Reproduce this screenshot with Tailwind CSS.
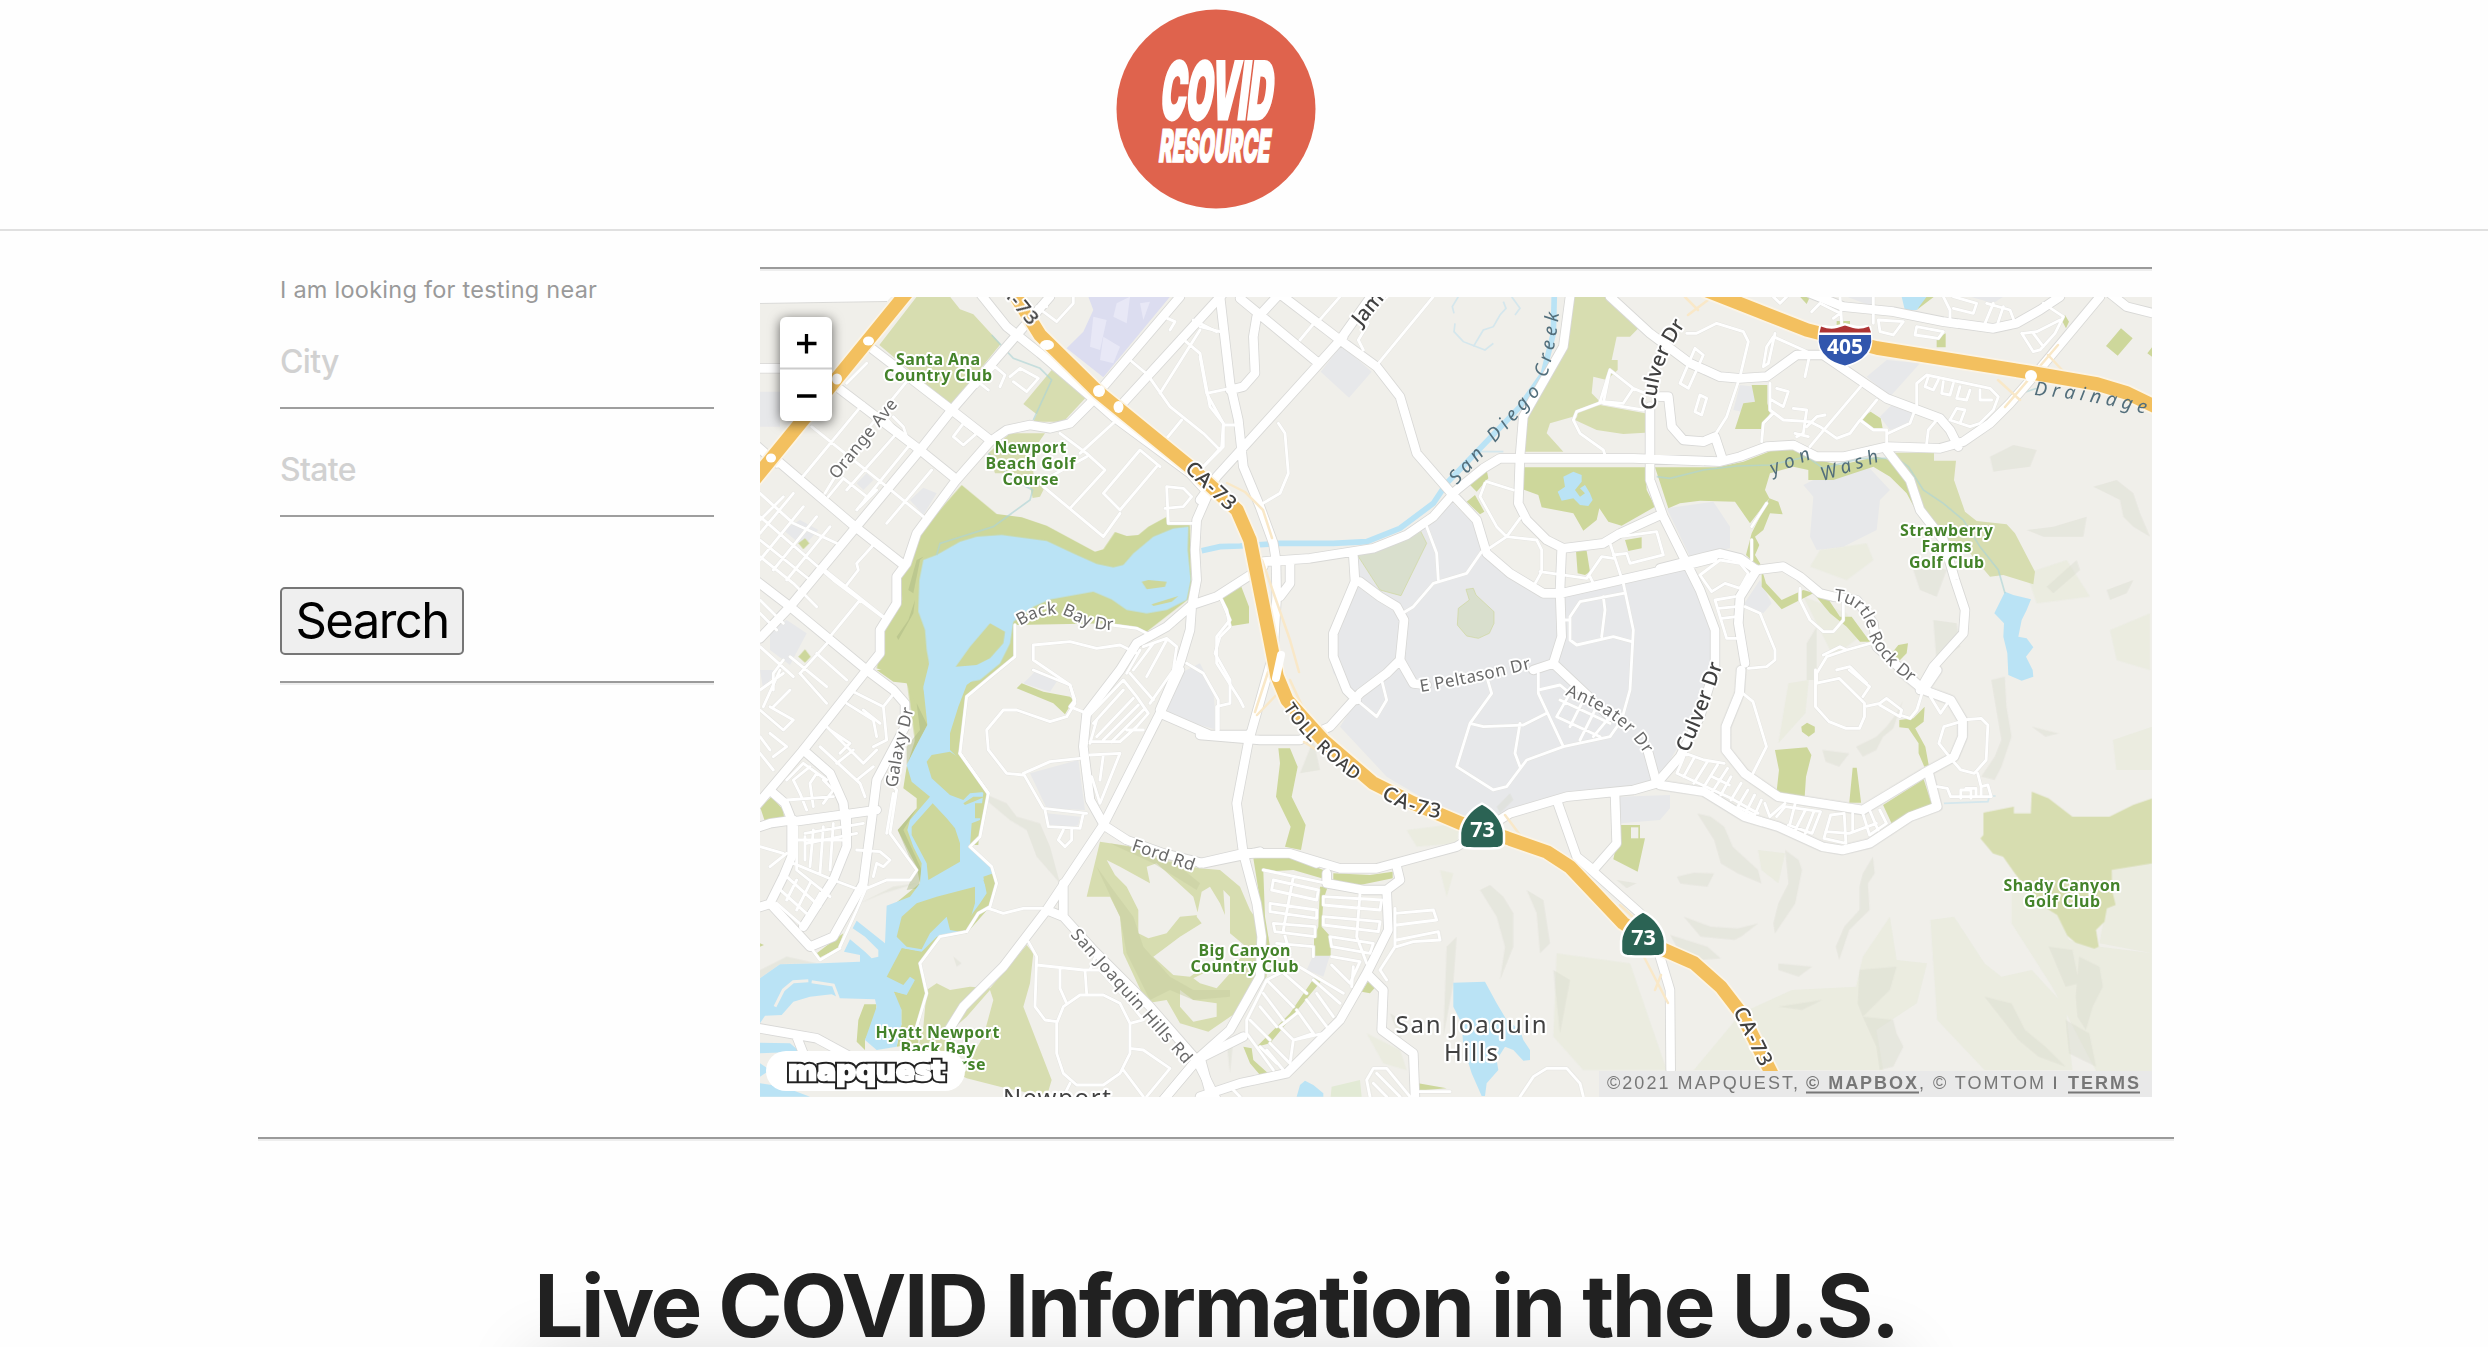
<!DOCTYPE html>
<html lang="en">
<head>
<meta charset="utf-8">
<title>COVID Resource</title>
<script src="https://cdn.jsdelivr.net/npm/@tailwindcss/browser@4"></script>
</head>
<body class="w-[2488px] h-[1347px] overflow-hidden bg-[#fefefe] font-['Inter',sans-serif]">
<header class="h-[231px] border-b-2 border-[#e0e0e0] flex justify-center pr-14 pt-[9px]">
  <svg class="w-[200px] h-[200px]" viewBox="0 0 200 200">
    <circle cx="100" cy="100" r="99.5" fill="#df634d"/>
    <g fill="#fff" stroke="#fff" font-family="Inter" font-weight="900">
      <text transform="translate(43 110) skewX(-7) scale(1 2.02)" font-size="39" stroke-width="1.6" textLength="112" lengthAdjust="spacingAndGlyphs">COVID</text>
      <text transform="translate(42 153) skewX(-7) scale(1 1.8)" font-size="25" stroke-width=".9" textLength="111" lengthAdjust="spacingAndGlyphs">RESOURCE</text>
    </g>
  </svg>
</header>
<main class="w-[1916px] ml-[258px]">
  <div class="flex px-[22px] pt-9">
    <form class="w-[434px] mr-[46px]">
      <label class="block pt-[7px] h-[58px] leading-8 text-[23.5px] tracking-[0.25px] text-[#9a9a9a]">I am looking for testing near</label>
      <div class="h-[84px] border-b-2 border-[#9e9e9e] pt-[17px] leading-10 text-[32px] font-medium tracking-[-0.7px] text-[#d1d1d1]">City</div>
      <div class="h-[108px] border-b-2 border-[#9e9e9e] pt-[41px] leading-10 text-[32px] font-medium tracking-[-0.7px] text-[#d1d1d1]">State</div>
      <button type="button" class="block mt-[70px] w-[184px] h-[68px] rounded-[5px] border-2 border-[#767676] bg-[#efefef] text-[49px] leading-[60px] tracking-[-1.6px] text-black">Search</button>
      <div class="mt-[26px] h-1 border-t-2 border-t-[#9a9a9a] border-b-2 border-b-[#eee]"></div>
    </form>
    <section class="w-[1392px]">
      <div class="h-1 border-t-2 border-t-[#9a9a9a] border-b-2 border-b-[#eee]"></div>
      <div class="relative mt-[26px] h-[800px] overflow-hidden bg-[#f0efea]">
        <svg class="block w-[1392px] h-[800px]" viewBox="760 297 1392 800">
          <defs>
            <g id="major">
              <g transform="translate(750 260) scale(.33333)">
                <path d="M30 1135 120 1040 315 805 510 570 605 450 800 225 900 110M260 380 510 570 615 655M365 265 605 450 720 540M80 600 315 800 455 910M-10 940 120 1040 350 1230M1040 410 960 490 900 505 840 495 770 510 720 545 615 665 500 820 470 910 440 950 440 1030 390 1110 390 1180 350 1230 160 1470 0 1660M690 100 770 200 870 280 1010 400 1090 470 1320 640 1375 700 1340 780 1335 870 1340 960 1325 1040 1320 1110 1290 1210 1230 1350M1060 380 1290 110M1100 450 1420 100M1325 1035 1400 1010 1540 920M1325 1035 1250 1100 1160 1150 1110 1230 1010 1360 1000 1460 1020 1620 1065 1700M30 325H110M0 540 80 610"/>
              </g>
              <g transform="translate(1200 260) scale(.33333)">
                <path d="M60 110 90 370 115 480 130 620 180 740 220 850 228 900 230 1010 220 1180 150 1430M170 170 160 230 165 340 130 380 90 390M120 115 350 305M430 230 340 330 50 650 0 720M250 110 420 240 530 320 600 410 650 580 750 695 830 780 860 880 930 940 1030 1000H1085L1460 915 1540 895M180 165 240 100M420 240 520 100M1110 110 1090 260 970 470 960 590 955 730 980 780 1040 840 1090 865 1210 850 1260 820 1380 765M190 905 330 895 520 865 620 825 700 770 770 690 850 625 900 595H1300L1560 605 1620 590 1700 560 1780 555 1850 590 1930 590 2060 560 2220 565 2290 545 2370 490 2430 430 2500 350 2700 110M460 885 465 965 400 1120 400 1190 440 1290 470 1320M480 965 540 1010 590 1040 612 1080 600 1200 560 1240 480 1300 390 1400 300 1440 180 1440 0 1425M600 1200 640 1270 680 1275M1085 870 1080 990 1085 1130 1060 1210 1000 1230M1060 1210 1230 1370M1230 110 1350 220 1470 310 1560 350 1620 355 1700 350 1790 285H1870L2060 415 2220 475 2250 510 2275 560M1350 440V660L1390 770 1500 990 1545 1110 1545 1220 1500 1370 1440 1490 1370 1570M270 900V970L240 1010"/>
              </g>
              <g transform="translate(1660 260) scale(.33333)">
                <path d="M0 410 25 410 35 500 70 540 130 545 165 530 185 590M450 100 550 140 700 155 850 185 1000 205 1070 190 1140 150 1200 110M1350 100 1400 140 1480 160M680 570 750 660 780 750 850 840 885 960 915 1050 910 1120 820 1220 780 1290M0 925 180 880 240 895 290 930 370 920 420 950 480 1000 520 1010 590 1020 640 1090 650 1160 780 1280M290 930 240 1010 235 1090 255 1210"/>
              </g>
              <g transform="translate(750 670) scale(.33333)">
                <path d="M1290 0 1230 130 1060 465 890 720 760 890 640 1010 590 1090M1230 130 1380 195H1500M1060 465 1130 510 1240 550 1360 580 1530 545M890 720 940 740 1030 840 1200 1010 1340 1170 1400 1290M1340 1170 1240 1290M0 1070 200 1105 320 1170M1480 1100 1340 1170M940 640V740M140 1100 160 1150M350 0 430 60 465 100V170L380 330 365 450 340 640 250 800 180 830 60 700 100 620 125 560V450L105 400 65 365M160 240 240 310 280 400 290 500M130 455 380 420M0 480 60 460 130 450M0 720 65 700M290 430 290 530 250 630 160 770"/>
              </g>
              <g transform="translate(1200 670) scale(.33333)">
                <path d="M150 190 110 400 130 550 170 700 185 800 180 920 90 1080 0 1160 -110 1290M0 580 130 550H270L420 595H530L770 530 930 430 1100 380 1300 360 1370 340 1340 230M130 550H270L350 580M380 610 380 640 490 660H560L600 630 590 590M560 660 565 780 500 910 420 1050 260 1210 120 1240 0 1280M0 1160 30 1270M500 910 550 960 545 1080 640 1150 645 1280M1070 390 1130 560 1180 600 1250 520 1245 370M1130 560 1320 730M1380 860 1410 960 1412 1200"/>
              </g>
              <g transform="matrix(.338 0 0 .33333 1660 670)">
                <path d="M240 0 235 70 195 170V240L250 310 350 380 600 420 780 310 870 260 895 200V150L860 90 780 60 720 10M780 60 820 0M0 345 130 365 250 440 350 470 480 530 540 540 620 520 740 440 820 410 795 310"/>
              </g>
            </g>
            <g id="minor">
              <g transform="translate(750 260) scale(.33333)">
                <path d="M185 500 410 680 520 770M290 370 350 310M340 430 150 660M470 365 310 560 225 700M440 520 290 690M475 560 320 750M410 475 480 560 460 500 430 470M545 630 410 790M380 690 330 740 350 710 280 655 235 710M610 530 640 490 680 520 640 555ZM30 780 100 710M30 700 130 790 260 850M30 840 180 960M30 890 130 970 200 1040M130 700 30 820M160 740 30 900M200 770 70 930M240 800 110 960M280 840 150 1010M30 770 250 960 410 1080M225 930 400 1070M370 855 320 910 325 930 290 975M330 1020 240 1130M30 1020 100 1090M30 1060 80 1110M240 1140 150 1240M120 1190 230 1280M200 1180 290 1260M30 1160 130 1250M70 1290V1240L100 1200M680 380 735 320 765 345 750 380M690 370 715 390M780 350 810 325 865 355 830 395 790 365M890 140 860 140 920 185 970 130V100M930 520 1010 580 1065 630M990 580 1100 480M1010 590 900 650M1220 620 1110 750 1060 700 1170 570 1230 620M880 680 1060 830 1110 760M1065 630 960 745M1250 680 1300 685 1325 710 1300 740 1245 745M1250 680 1255 790H1330M1240 170 1275 185 1260 210M1190 340 1260 440 1360 520 1410 570M1140 300 1200 350M1350 210 1230 400M1290 230 1350 280 1380 440 1420 490 1415 560 1360 620M1330 180 1400 215M1295 480 1250 535M795 1095 795 1190 710 1260 650 1310 630 1480 715 1600M850 1155 960 1145 1040 1165 1110 1155 1160 1180M850 1155V1200L960 1275 975 1330 950 1370 900 1385 800 1350 760 1350 710 1410 715 1470 770 1540 820 1545M1085 1095 1160 1105 1200 1125M1170 1170 1130 1240M1210 1150 1150 1230M1250 1140 1190 1250M1180 1160 1250 1135 1280 1160 1270 1230 1200 1330M1410 1010 1440 1080 1400 1130 1400 1210 1470 1320 1480 1340M1310 1210 1360 1240 1405 1320V1410"/>
              </g>
              <g transform="translate(1200 260) scale(.33333)">
                <path d="M0 290 20 400 70 490 70 560 10 620M0 200 60 215M20 400 90 385M70 495H110M235 490 255 520 265 640 240 700 180 735M350 180 300 240M420 110 350 190M700 110 535 310M480 190 505 190 475 240 490 270M680 800 710 880 715 960M845 875 800 940 700 970 640 1040 615 1055M860 665 940 690M855 670 840 710 890 800 920 830 860 870M960 775 920 830 1010 840 1025 870V935L1000 980M1020 935 1160 955 1205 890 1240 895M1200 425 1230 330 1300 385 1360 410M1300 385 1270 430 1210 425 1130 455 1120 480 1140 520 1210 570 1215 585M1230 330 1210 430 1330 450M1230 850 1270 970 1300 1110 1290 1290 1265 1380 1230 1430 1090 1460 980 1500 920 1580 880 1590 770 1520 810 1390 875 1300 860 1250M1260 830 1370 815 1390 885 1290 910 1280 880 1240 885M1270 1000 1140 1025 1110 1070V1140L1130 1155 1240 1130 1295 1145M1210 1010 1215 1050 1205 1130M1110 1080H1080M1170 950 1180 970M60 1010 80 1050 90 1100 60 1130 45 1180 90 1260 90 1330 50 1340V1420M810 1390 850 1400 970 1395 1040 1360M960 1390 945 1480 960 1520M1015 1240V1300L1090 1460M470 1320 530 1370 560 1320 545 1260M1015 1290 1080 1275 1110 1300 1070 1370M1080 1320 1230 1390M1070 1370 1200 1430M1150 1320 1110 1400M1190 1340 1140 1440M1230 1370 1180 1430"/>
              </g>
              <g transform="translate(1660 260) scale(.33333)">
                <path d="M80 220H110L170 190 250 215 265 245 240 350 200 470 165 525M105 265 130 285 85 385 60 370ZM120 405 140 415 125 465 105 455ZM345 220 325 310 310 320 320 260 340 230 430 270 450 280 435 350M330 370V450L370 480 450 485 480 500 530 535 570 520 600 480 640 510 680 510V560M450 560 500 500 610 370M340 460 310 490 305 545M350 385 385 395 370 440 335 420M400 445 440 450 430 520 410 530M440 500 470 470 495 465M405 520 445 530M605 475 650 420M685 520 750 490 765 450M800 550 805 510 830 480M770 440V370L800 345 990 385 1015 410 1000 450 960 490 930 500 870 480 890 445 915 450 900 490M805 350 795 380 820 390 835 360M850 365 845 400 870 405 880 370M900 380 890 415 920 420 930 390M960 390V420L995 420M455 155 480 130 540 160 520 175M540 110 545 190M640 110V190M655 180 730 185 700 225 660 215ZM770 200 850 215 835 235 765 225ZM850 110 870 150V190M880 110 950 130 940 160 880 145M1000 130 975 190M1030 140 1010 200M980 130 1050 150 1065 190M1150 130 1210 170 1185 220 1140 270 1120 275 1085 220M1090 220 1130 215 1200 180M1120 220 1150 260M340 110 360 130 390 100M120 945 180 900 240 910 265 940 240 985 195 970 155 995ZM165 1020 225 1010M175 1045 230 1040M185 1075 230 1070M165 1020 200 1135H235M255 1040 300 1060 345 1170 345 1200 320 1220 265 1225M420 985V1020L450 1080 490 1115H520L550 1080V1020M490 1185 540 1160 560 1170 500 1190 470 1240V1270M560 1170 650 1145M530 1230 570 1220 620 1270M275 800 320 730M275 900V840"/>
              </g>
              <g transform="translate(750 670) scale(.33333)">
                <path d="M850 0 960 45 975 90 960 110 1010 130M630 250 715 370 690 500 660 530 725 590 740 640 720 710 685 730 650 785 570 800 510 880 530 970 500 1070M715 715 760 730 820 715H890M990 265 900 275 820 310 880 415 1010 430M885 420 895 470 990 475 1000 430M940 480 925 510 945 530 965 510V480M835 815 860 860 855 1010 885 1050 920 1055M860 885 1000 900 1050 900 1140 1000 1180 1050 1140 1060M930 895V955L950 1000M1005 900 1010 970M1020 900 1040 850M920 1060 940 1010 990 975H1060L1110 1000 1140 1060V1150L1110 1210 1060 1245H980L940 1210 920 1150ZM1140 1135 1180 1140 1260 1195 1190 1280M1120 1200 1180 1280M960 1240 940 1280M1010 145 1120 30 1160 80 1195 130 1160 170 1110 215H1020M1030 160 1120 60M1040 200 1150 85M1060 210 1165 105M1085 215 1180 120M1040 150 1020 220M1020 255 1110 250 1050 400 1025 320M1060 255 1050 330M1140 10 1210 90M1130 180H1180M270 830 320 720 350 650M180 830 210 870 270 835M350 655 410 630H480L500 600 420 490 440 360 430 350M440 60 400 110 410 210 370 230M300 60 400 110M290 100 370 150 380 200M240 180 300 220 270 250M210 230 330 340 345 380M220 160 340 280 380 240M340 120 390 160M260 280 310 240M320 330 370 290M60 110 130 150 100 180 30 120M120 60 70 110M150 10 230 100M90 0 40 110M30 60 100 10M30 200 60 240M70 260 110 230 60 190M30 250 70 300M110 330 160 280 230 330M150 370 130 330 180 290M170 420 150 370M190 410 180 340 200 310M220 400 250 360 220 330M110 390 250 380M140 510H290M165 500V570M190 480 180 590M220 470 210 610M250 460 240 600M140 470V600M165 490 340 460M170 520 320 490M130 580 250 630 330 660M80 650 180 740M110 620 210 710M140 600 240 680M60 590 110 550M30 530 100 550M110 690 140 630M140 720 180 640M170 740 210 670M320 540 390 545 420 570 400 590 380 580 370 620M430 370 410 490M80 700 160 770"/>
              </g>
              <g transform="translate(1200 670) scale(.33333)">
                <path d="M190 600 380 640M220 630 355 660 350 690 215 660ZM210 700 350 720V745L210 725ZM220 760 345 770V800L225 785ZM230 820 340 830V860M280 620 250 780 270 850M370 680 545 690 540 720 370 705ZM370 740 540 755 535 785 370 765ZM390 800 520 820 510 850 395 830ZM395 860 480 875 450 940 395 885M480 670 470 800 500 880M585 715V830L540 900 560 930M585 730 700 720 710 750 590 765M590 810 715 785 720 810 640 815 590 830M240 910 200 930 140 1050V1090L220 1200M200 930 280 1010M190 970 250 1050M180 1010 230 1070M150 1050 210 1110M240 900 320 970M280 880 430 970M340 930 420 1000M350 970 400 1040M320 990 380 1070M290 1020 340 1090 280 1110 240 1070 290 1030M210 1120 280 1190M200 1140 250 1200M180 1130 230 1180M270 1180 280 1110 370 1090M460 890 455 950M510 1280 500 1230 520 1195H560L630 1280M530 1210 600 1280M520 1240 560 1280M960 1280 1000 1220 1040 1195H1100L1140 1240 1150 1280M650 1265H750M100 1260 120 1280"/>
              </g>
              <g transform="matrix(.338 0 0 .33333 1660 670)">
                <path d="M245 70 275 95 315 230 265 330M460 40 460 110 500 155 550 175H590L605 140V100L530 25 460 40V0M560 0 620 50 600 80M605 110 650 100 670 85 715 120 710 140 650 105M710 135 740 145 760 120 775 70M800 80 830 130 850 100M895 150 950 145 970 165 965 270 930 310 890 300 860 265 825 220 840 170 890 155M940 310 950 350M820 350 850 355 860 380H980L970 345 950 350V380M890 385V360H920V385M905 355H935V380M75 250 50 310 210 385 290 430M75 250 130 270 190 280M100 265 70 320M140 275 100 340M170 285 130 350M200 295 155 365M210 320 180 375M155 320 205 345M240 340 210 390M260 360 230 410 280 435 300 390M280 375 255 425M310 400 325 440 370 400M345 440 370 410 475 425 450 490 380 465M400 400 385 460M430 420 400 480M455 425 430 490M505 435 485 505 550 520 545 430ZM490 485 560 490 640 460M570 430V480M600 430 620 495 670 460 650 420M620 420 645 480"/>
              </g>
            </g>
            <g id="freeway">
              <path d="M909 290 754 480"/>
              <path d="M1012 290 1040 335 1098 392 1190 467 1237 510 1250 540 1258 580 1270 640 1277 676 1287 700 1323 740 1373 783 1413 803 1460 823 1507 838 1547 852 1570 867 1623 923 1660 948 1694 963 1721 987 1741 1013 1775 1080"/>
              <path d="M1705 290 1807 330 1877 348 2027 372 2097 384 2127 393 2156 407"/>
            </g>
          </defs>

          <!-- built-up and campus areas -->
          <g fill="#e7e8ea">
            <path transform="translate(1200 260) scale(.33333)" d="M750 720 820 790 850 870 910 930 1000 990 1080 1015 1460 920 1540 1090 1545 1210 1440 1450 1370 1570 1100 1610 930 1660 780 1680 560 1550 420 1400 470 1320 400 1240 385 1180V1130L475 960 470 880 600 840ZM425 255 515 335 447 413 362 335Z"/>
            <path transform="translate(1660 260) scale(.33333)" d="M620 350 680 300 780 310 690 410ZM660 470 700 430 765 450 750 490 690 510ZM20 745 160 725 210 800V865L90 890ZM430 675 480 650 620 615 690 690 660 720 650 810 550 860 470 870 450 830 460 710ZM220 450 240 375 285 380V425L250 430 245 455ZM250 1035 300 960 335 1030 310 1060ZM560 110H640V140ZM930 110H1030L1000 130ZM-120 1610 30 1605V1645L0 1680-120 1690Z"/>
            <path transform="translate(750 670) scale(.33333)" d="M840 310 985 270 1005 420 890 415ZM890 430 990 440 985 465 945 478 895 465ZM1270 20 1350-20 1390 60 1400 180 1250 135ZM820 40 860 0 920 35 900 65ZM30 0H80L40 60ZM1670 900 1690 855H1740L1720 920Z"/>
            <path transform="translate(750 260) scale(.33333)" d="M480 720 520 683 560 700 520 765ZM100 810 150 780 205 810 160 860ZM60 1110 110 1080 170 1120 120 1215 60 1170ZM30 395H90V500H30ZM320 670 350 640 370 660 340 690Z"/>
          </g>
          <path fill="#dcddf0" transform="translate(750 260) scale(.33333)" d="M1015 110H1260L1060 352 950 265 1000 215 1030 150Z"/>
          <path fill="#e8e8f6" transform="translate(750 260) scale(.33333)" d="M1030 170 1070 180 1050 270 1020 260ZM1100 130 1140 110 1130 190 1090 170ZM1060 230 1110 260 1090 310 1050 300ZM1170 130 1200 125 1180 180Z"/>

          <!-- terrain shading -->
          <g fill="#dfe6cc" opacity=".32">
            <path transform="matrix(.338 0 0 .33333 1660 670)" d="M390 960 580 950 600 860 680 740 700 870 790 880 760 1000 640 1080 660 1200H100L240 1030ZM800 750 870 740 960 880 1010 920 1100 900 1200 1010 1220 1200H960L820 1050ZM1040 620 1170 720 1210 810 1300 830 1456 850V1203H1290L1160 950 1040 760ZM380 40 440 30 430 130 350 220ZM290 540 370 550 350 640 300 600ZM1340 210 1456 170V300H1350ZM1340 600 1456 580V850L1300 820Z"/>
            <path transform="translate(1200 670) scale(.33333)" d="M1070 850 1290 880 1400 1200H1150L1060 1100ZM500 1090 600 1140 620 1200 550 1180ZM620 480 780 460 770 520 650 530ZM720 600 760 610 740 680Z"/>
            <path transform="translate(1660 260) scale(.33333)" d="M480 870 620 850 640 900 560 960 450 920ZM940 880 1030 860 1010 950ZM1100 940 1220 900 1290 1010 1130 1030ZM1350 1110 1470 1060V1230L1370 1200ZM430 1010 560 1060 600 1130 520 1190Z"/>
          </g>
          <g fill="#d6d8cb" opacity=".36">
            <path transform="matrix(.338 0 0 .33333 1660 670)" d="M110 430 150 440 190 470 215 530 290 600 300 640 230 610 180 580 160 510ZM370 540 410 570 420 600 400 700 340 790 335 760 350 700 380 640ZM630 560 635 610 615 640 620 720 560 780 530 870 520 830 545 770 590 720 590 650 600 610ZM70 740 110 755 150 770 230 775 290 760 240 800 220 810 120 800ZM30 795 140 830 180 865 120 870 60 850ZM50 620 100 608 160 610 140 650 90 645 60 640ZM580 230 640 200 670 170 700 130 720 90 690 175 660 200 640 240 600 260ZM980 30 1020 20 1025 110 1040 200 1010 290 990 330 950 320 990 260 1010 210ZM1150 830 1220 840 1240 940 1200 950ZM1240 860 1300 890 1310 950 1280 1010 1260 1080 1235 1040 1230 980ZM600 1040 690 1050 700 1090 720 1130 690 1190 650 1200 640 1130ZM590 900 700 890 680 960 600 1040 585 1000ZM960 980 1040 1000 1080 1080 1140 1130 1200 1190 1120 1160 1060 1110ZM350 880 450 890 410 920 350 900ZM350 1010 480 990 420 1020ZM480 240 560 250 530 290 490 275ZM1200 1050 1270 1090 1290 1190 1210 1150ZM1100 170 1180 190 1140 200Z"/>
            <path transform="translate(1200 670) scale(.33333)" d="M840 660 870 645 910 680 940 730V830L900 930 915 830 890 740ZM980 660 1030 690 1050 820 1020 850 1010 730ZM740 830 770 800 760 940 730 1100ZM1060 900 1110 930 1080 1090ZM890 410 930 370 940 390 900 430ZM570 1030 620 1060 600 1110ZM300 310 340 210 360 300ZM80 1120 100 1110 90 1210ZM1250 630 1310 640 1280 655Z"/>
            <path transform="translate(1660 260) scale(.33333)" d="M990 590 1060 555 1130 570 1110 620 1050 628 1000 635ZM1300 680 1370 660 1420 700 1440 760 1470 830 1420 800 1390 770 1380 720 1340 700ZM1100 810 1180 800 1280 770 1270 830 1150 830ZM750 900 860 930 830 1010 780 990ZM820 1080 890 1090 900 1160 830 1210ZM1160 980 1250 900 1260 930 1180 1000ZM440 1150 470 1100V1260H440ZM1340 990 1420 960 1400 1000 1350 1020Z"/>
            <path transform="translate(750 670) scale(.33333)" d="M700 370 770 400 800 440 870 460 900 530 930 640 860 560 830 480 780 450 720 400ZM610 860 635 880 620 890ZM330 700 430 650 500 640 400 670ZM30 900 110 860 200 880 90 883 30 925Z"/>
          </g>

          <!-- golf courses -->
          <g fill="#d7ddb0">
            <path transform="translate(750 260) scale(.33333)" d="M500 110H600L630 148 670 163 752 252 603 435 388 255ZM905 330 1012 408 940 485H850L860 463 820 432ZM780 520 885 520 850 570V640L885 680 870 710 848 714 840 680 800 640 735 640 715 580Z"/>
            <path transform="translate(1200 260) scale(.33333)" d="M1120 110H1240L1315 205 1290 230H1250L1235 300H1253V330L1220 360 1180 350 1175 400 1200 425 1190 450 1050 490 1040 520 1090 575H975L980 480 1090 280ZM1200 435 1335 460V518L1270 522 1190 510 1125 480 1140 455Z"/>
            <path transform="translate(1660 260) scale(.33333)" d="M700 578H822V602H888L882 660 915 755 950 783 1040 793 1065 820 1125 935 1120 973 1030 945 990 950 930 880 850 830 790 740Z"/>
            <path transform="matrix(.338 0 0 .33333 1660 670)" d="M957 428 1047 410V430H1097L1100 365 1150 385 1220 440H1330L1400 405 1456 385V580L1337 600V660L1348 705 1322 715 1315 755 1290 780 1298 830 1285 836 1230 818 1205 797 1175 735 1120 700 1050 610 1015 560 985 550 948 505 957 495Z"/>
            <path transform="translate(750 670) scale(.33333)" d="M530 960 560 940 600 960 660 950 720 955 830 825 850 850 840 940 820 1010 905 1230 890 1280 750 1250 650 1225 500 1150 520 1070ZM1050 515 1150 530 1230 570 1350 595 1410 600 1470 650 1500 720 1555 800 1550 920 1470 1020 1375 1085 1290 1060 1250 990 1190 1000 1120 850 1110 740 1080 680H1010Z"/>
          </g>
          <g fill="#f0efea" transform="translate(750 670) scale(.33333)">
            <path d="M605 1080 650 1040 720 960 730 990 700 1100 640 1200 600 1130ZM1070 570 1110 590 1200 640 1190 590 1220 580 1330 680 1345 735 1290 740 1250 790 1195 805 1165 790V720L1130 650 1095 615ZM1210 860 1290 800 1355 760 1340 740 1355 665 1380 650 1410 700 1425 735 1420 660 1440 680 1440 790 1500 840 1430 900 1340 905 1320 920 1270 915ZM1290 960 1330 990 1400 1000V1040L1330 1055 1290 1010ZM1330 925 1400 890 1440 910 1400 955 1350 940Z"/>
          </g>
          <g fill="#c5cba0" opacity=".45" transform="translate(750 670) scale(.33333)">
            <path d="M1040 590 1090 660 1150 740 1180 830 1260 920 1330 960 1440 960 1440 980 1330 990 1260 960 1200 990 1130 850 1110 740ZM1080 520 1240 550 1350 640 1340 660 1210 580Z"/>
          </g>

          <!-- parks -->
          <g fill="#cdd79b">
            <path transform="translate(750 260) scale(.33333)" d="M635 675 740 762 815 772 890 797 1035 875 1060 868 1095 816 1130 828 1165 825 1195 800 1250 770 1255 790 1320 795 1325 1010 1190 1115 1160 1105 1080 1090 795 1095V1190L710 1260 650 1310 630 1480 500 1480 470 1260 380 1225 405 1090 455 1020 450 930 490 840ZM145 850 165 835 178 850 160 868ZM145 1190 165 1168 182 1190 165 1208ZM1415 1010 1440 990V1090Z"/>
            <path transform="translate(1200 260) scale(.33333)" d="M70 1005 120 970 147 1040V1090L95 1098ZM972 622H1335L1340 690 1365 740 1265 797 1225 785 1198 745 1190 780 1150 812 1120 760 1025 742 1015 705 968 688ZM860 630 865 655 830 695 805 670ZM800 725 825 705 853 755 840 763ZM1128 873H1160L1170 935 1155 945 1133 940ZM1275 840 1325 832V865L1285 873Z"/>
            <path transform="translate(1660 260) scale(.33333)" d="M-15 622 170 622 250 605 340 570 400 565 450 595 540 615 650 590 690 600 760 690 780 775 740 700 690 650 640 620 520 660H445V630L400 620 330 640 315 690 328 715 270 790 225 725 120 722 60 730 25 745ZM328 715 355 725 368 763 330 760 310 810 285 830 298 855 285 885 300 910 318 970 365 1020 430 990 500 1010 540 1070 575 1070 630 1145 600 1145 560 1100 510 1060 460 1000 365 1048 305 980V930L258 885 275 820ZM275 375H322V430L330 460 305 507H225L250 430 285 425ZM600 475 632 455 662 475 668 505 635 505ZM420 110H450L440 132ZM830 235 857 220V262H830ZM1383 205 1418 235 1373 287 1338 258ZM1462 280 1476 262V290ZM1205 180 1215 165 1227 185 1218 205ZM795 110H822L770 150ZM695 1180 715 1155 744 1150 740 1180 715 1205ZM530 183H570V195H530Z"/>
            <path transform="translate(750 670) scale(.33333)" d="M380 0 430 35 470 40 500 110 505 180 470 290 460 355 500 385V415L443 480 500 590 510 640 430 705 410 800 440 830 410 920 432 965 455 1010V1060L440 1130 505 1120V1070L530 970 510 880 570 800 650 790 720 710 740 650 725 590 660 530 690 500 715 370 630 250 653 75 750 0ZM343 1003H380L375 1050 345 1110V1140L320 1115 325 1050ZM30 410 65 380 100 420 103 455 50 470ZM800 55 815 40 880 65 960 80 970 90 945 133 910 100ZM200 850 280 790 265 835 205 865ZM30 820 42 825 30 830Z"/>
            <path transform="translate(1200 670) scale(.33333)" d="M235 235H270L293 290 275 380 317 465 303 540 255 530 272 470 228 380 240 280ZM160 565 270 560 370 600 365 625 280 600 190 605 195 740 210 830 195 820 180 690ZM400 610 510 615 578 605V625L480 645 400 630ZM360 650H383L370 690 365 770 392 800V857H342V800L355 770ZM345 920 362 935 300 1010 260 1060 210 1120 170 1130 220 1080 270 1030ZM130 1130 155 1135 160 1170 210 1215 180 1215 150 1180ZM485 965 510 925 532 945 510 970ZM1262 465H1320V505H1335L1313 605 1240 568ZM655 1240 740 1255 650 1262Z"/>
            <path transform="matrix(.338 0 0 .33333 1660 670)" d="M340 240 435 232 448 255 432 320 428 380 345 365 352 300ZM418 170 435 158 458 170V187L440 200 420 185ZM570 293H582L595 398H560ZM660 405 780 328 805 405 685 460ZM708 150 750 145 783 110 780 155 755 175 785 230 795 285 782 290 765 250V220L735 175 708 172Z"/>
          </g>
          <g fill="#d9dfcd" stroke="#cdd79b" stroke-width="2" transform="translate(1200 260) scale(.33333)">
            <path d="M472 885 660 810 680 850 603 1007 540 990ZM798 988 820 985 828 1005 882 1055V1090L868 1120 835 1135 800 1128 772 1095 775 1045 808 1020Z"/>
          </g>
          <path fill="#f0efea" transform="translate(1200 670) scale(.33333)" d="M1293 472H1315V505H1293Z"/>
          <path fill="#e2ead5" transform="translate(1200 670) scale(.33333)" d="M395 1250 480 1230 485 1280H392Z"/>

          <!-- hill edges beside the bay -->
          <g fill="#a9b581" opacity=".45">
            <path transform="translate(750 260) scale(.33333)" d="M520 890 510 900 490 1000 475 990 500 900ZM495 1020 490 1060 445 1140 440 1130 475 1080Z"/>
            <path transform="translate(750 670) scale(.33333)" d="M500 100 532 165 495 235 470 285 470 230 510 180ZM500 415 460 480 515 600 505 655 470 660 495 600 443 480Z"/>
          </g>

          <!-- water -->
          <g fill="#bae3f5">
            <path transform="translate(750 260) scale(.33333)" d="M1315 800 1270 805 1210 830 1150 880 1120 915 1090 922 1040 912 970 880 890 843 755 825 680 830 630 845 560 885 520 900 508 960 505 1055 525 1110 530 1170 540 1225 520 1290 690 1260 750 1210 780 1150 790 1085 850 1040 900 1018 1030 995 1085 1018 1130 1050 1190 1060 1250 1050 1310 1020 1322 960 1313 870Z"/>
            <path transform="translate(750 670) scale(.33333)" d="M540-30 520 50 532 165 495 235 470 285 485 335 540 380 480 450 472 480 490 530 515 580 510 640 480 680 410 707 405 820 320 752 308 775 345 800 385 840V860L365 865 345 845 300 808 282 845 330 855V875L215 880 90 883 30 925V1060L45 1037 95 1035 130 995 180 980 245 973 270 985 375 988 380 1010 345 1110 380 1140 440 1130 455 1060V1010L432 965 480 980 495 930 455 835 515 845 560 800 620 795 690 700 710 670 700 620 730 610 725 590 660 530 665 460 690 450 700 370 625 265 600 240V190L625 110 650 45 750-30ZM30 1118 120 1120 150 1145 30 1150ZM30 1180 60 1200 30 1220ZM30 1240 100 1250 180 1280H30Z"/>
            <path transform="translate(1200 260) scale(.33333)" d="M1090 650 1120 635 1145 645V665L1125 690 1140 710 1155 700 1140 685 1155 675 1170 700 1178 720 1165 738 1140 735 1120 715 1085 722 1073 695 1095 680Z"/>
            <path transform="translate(1660 260) scale(.33333)" d="M725 110H800L770 150 735 152ZM1035 995 1060 1005 1113 1018 1100 1050 1085 1080 1075 1130 1100 1135 1120 1162 1098 1190 1118 1230 1120 1250 1085 1262 1045 1245 1042 1180 1030 1130 1032 1090 1003 1060Z"/>
            <path transform="translate(1200 670) scale(.33333)" d="M760 938 855 935 890 1000 920 1050 960 1080 970 1110 990 1140V1170L970 1172 940 1140 915 1130 890 1170 895 1200 860 1240 855 1278H845L815 1210 790 1130 785 1060 760 1010ZM300 1245 315 1232 340 1245 370 1270V1280H290Z"/>
          </g>
          <g fill="#cdd79b">
            <path transform="translate(750 260) scale(.33333)" d="M720 1090 765 1115 760 1150 720 1195 680 1215 617 1220 660 1160ZM1175 965 1195 960 1250 965 1245 980 1190 988ZM1205 1033 1285 1008 1265 1025 1210 1038Z"/>
            <path transform="translate(750 670) scale(.33333)" d="M530 275 545 255 600 245 630 265 710 365 660 370 640 390 600 375 545 325ZM548 400 590 445 615 475 630 520V575L535 630 530 580 485 495V470ZM440 800 455 740 500 700 560 680 675 650V700L660 750 630 785 600 780 590 740 540 790 515 838 470 830ZM455 835 515 847 540 830 575 800 510 880 530 970 500 1065 455 1060V1020L432 965 470 975 495 930 480 920 460 945 410 920ZM675 400H700V445H675ZM640 400 670 380H705L670 395 645 405ZM680 460H690L685 525 665 525ZM700 630 725 615 738 650 720 705 700 705 715 670Z"/>
          </g>
          <path fill="none" stroke="#f0efea" stroke-width="9" transform="translate(750 670) scale(.33333)" d="M75 1010 100 960 130 935 175 932M185 935 250 945 265 985"/>
          <path fill="none" stroke="#bae3f5" stroke-width="17" transform="translate(1200 260) scale(.33333)" d="M1063 100 1060 220 1030 340 960 440 740 670 700 730 600 805 500 845 400 850H240L120 858 60 860 5 872"/>
          <g fill="none" stroke="#add4d6" stroke-opacity=".65" stroke-width="5">
            <path transform="translate(750 260) scale(.33333)" d="M725 225 790 295 870 325 905 360 850 480M715 580 790 660 848 690 840 720 730 800 570 850 560 885" />
            <path transform="translate(1660 260) scale(.33333)" d="M-10 650 30 655 130 630 230 618 330 615 440 590 490 625 600 595H710L745 620 790 690 850 730 910 780 960 860 1015 930 1035 1000M1070 405 1130 385"/>
            <path stroke="#c5e2ee" transform="translate(1200 260) scale(.33333)" d="M775 110 757 140 762 160M765 190 762 215 790 245 855 270 880 250M820 260 850 210 880 200 900 165 918 145 910 125M935 110 960 145 945 165M840 575H910"/>
            <path stroke="#c5e2ee" transform="matrix(.338 0 0 .33333 1660 670)" d="M840 400 970 395 975 378H993"/>
          </g>

          <!-- roads -->
          <g fill="none" stroke-linejoin="round" stroke-linecap="round">
            <use href="#minor" stroke="#e4e4e1" stroke-width="11"/>
            <use href="#major" stroke="#d8d8d6" stroke-width="31"/>
            <use href="#minor" stroke="#fff" stroke-width="8.5"/>
            <use href="#major" stroke="#fff" stroke-width="26"/>
            <g stroke="#f9e8c8" stroke-width="2.5">
              <path d="M1227 483 1245 492 1263 510 1272 538M1262 560 1290 640 1299 672M1257 715 1286 685M1268 672 1255 712M1304 742 1317 750M1505 815 1520 835M1290 680 1305 712 1345 752M1620 905 1660 942M1643 955 1668 1003M1661 975 1655 990M1685 297 1698 310M1688 315 1708 300M2005 407 2058 345M2048 355 2064 372M1998 380 2020 400"/>
            </g>
            <use href="#freeway" stroke="#fbf4e6" stroke-width="17"/>
            <use href="#freeway" stroke="#f3c05f" stroke-width="13.5"/>
          </g>
          <path stroke="#fff" stroke-width="8" stroke-linecap="round" d="M1281 655 1276 678"/>
          <path fill="#fefefe" d="M760 297H891L887 301.500 760 303.500Z"/>
          <path stroke="#dadad8" d="M760 303.500 887 301.500"/>
          <g fill="#fff">
            <ellipse cx="868.500" cy="341" rx="5.500" ry="4.500"/><ellipse cx="837" cy="379" rx="5" ry="5.500"/><ellipse cx="771" cy="458" rx="5" ry="4.500"/>
            <ellipse cx="1047" cy="345" rx="7" ry="5"/><circle cx="1099" cy="391" r="6"/><ellipse cx="1118.500" cy="407" rx="5" ry="6"/><circle cx="2031" cy="376" r="6"/>
          </g>

          <!-- route shields -->
          <path d="M1819 326 1825 325Q1832 327 1837 325L1845 323 1853 325Q1860 327 1866 325L1871 326Q1876 350 1864 358 1857 364 1845 367.500 1832 364 1826 358 1814 350 1819 326Z" fill="#fff"/>
          <path d="M1819.500 332.500 1821 326.500Q1830 330 1837 328L1845 325.500 1853 328Q1860 330 1869 326.500L1871 332.500Z" fill="#ad3434"/>
          <path d="M1819 335H1871Q1873 349 1862 358 1855 363 1845 365.500 1834 363 1828 358 1817 349 1819 335Z" fill="#3156ad"/>
          <text x="1845" y="353.500" text-anchor="middle" font-family="Noto Sans" font-weight="700" font-size="21.500" fill="#fff" textLength="36" lengthAdjust="spacingAndGlyphs">405</text>
          <g fill="#2b6354" stroke="#fff" stroke-width="2.500">
            <path id="sh" d="M1482 803.500C1471 809 1461 820 1460 833L1460 842Q1460 847 1466 848 1482 849 1498 848 1504 847 1504 842V833C1503 820 1493 809 1482 803.500Z"/>
            <use href="#sh" x="161" y="108"/>
          </g>
          <g font-family="Noto Sans" font-weight="700" font-size="21.500" fill="#fff" text-anchor="middle">
            <text x="1482.500" y="836.500" textLength="24.500">73</text><text x="1643.500" y="944.500" textLength="24.500">73</text>
          </g>

          <!-- place labels -->
          <g font-family="Noto Sans" font-weight="700" font-size="16" fill="#44832a" stroke="#fff" stroke-width="4" stroke-linejoin="round" paint-order="stroke" text-anchor="middle" lengthAdjust="spacing">
            <text x="938" y="364.500" textLength="84">Santa Ana</text><text x="938" y="380.500" textLength="108">Country Club</text>
            <text x="1030.500" y="452.500" textLength="72">Newport</text><text x="1030.500" y="468.500" textLength="90">Beach Golf</text><text x="1030.500" y="484.500" textLength="56">Course</text>
            <text x="1946.500" y="536" textLength="93">Strawberry</text><text x="1946.500" y="552" textLength="50">Farms</text><text x="1946.500" y="568" textLength="75">Golf Club</text>
            <text x="2062" y="891" textLength="117">Shady Canyon</text><text x="2062" y="907" textLength="76">Golf Club</text>
            <text x="1244.500" y="956" textLength="92">Big Canyon</text><text x="1244.500" y="972" textLength="108">Country Club</text>
            <text x="937.500" y="1038" textLength="124">Hyatt Newport</text><text x="938" y="1054" textLength="75">Back Bay</text><text x="938" y="1070" textLength="95">Golf Course</text>
          </g>
          <g font-family="Noto Sans" font-size="24" fill="#414141" stroke="#fff" stroke-width="4.500" stroke-linejoin="round" paint-order="stroke" text-anchor="middle">
            <text x="1471" y="1032.500" textLength="151">San Joaquin</text><text x="1471" y="1061" textLength="54">Hills</text><text x="1057" y="1106" textLength="108">Newport</text>
          </g>
          <defs>
            <path id="backbay" d="M1020 626Q1054 606 1072 619 1094 631 1113 630"/>
            <path id="peltason" d="M1421 692Q1465 685 1534 668"/>
            <path id="anteater" d="M1565 695Q1625 717 1648 760"/>
            <path id="turtle" d="M1834 601Q1864 602 1870 638 1882 664 1914 685"/>
            <path id="creek" d="M1457 485 1540 393Q1556 360 1560 300"/>
            <path id="culver" d="M1656 410Q1655 365 1690 318"/>
            <path id="culver2" d="M1688 753Q1706 715 1724 660"/>
            <path id="drain" d="M2034 395Q2090 399 2150 415"/>
            <path id="galaxy" d="M897 788 903 752 915 704"/>
            <path id="toll" d="M1283 708Q1309 748 1362 786"/>
            <path id="ca73a" d="M1381 797Q1405 814 1446 819"/>
            <path id="ford" d="M1131 850 1196 872"/>
          </defs>
          <g font-family="Noto Sans" font-size="17" fill="#696969" stroke="#fff" stroke-width="4" stroke-linejoin="round" paint-order="stroke">
            <text transform="translate(837 480) rotate(-51)" textLength="97">Orange Ave</text>
            <text textLength="99"><textPath href="#backbay">Back Bay Dr</textPath></text>
            <text textLength="113"><textPath href="#peltason">E Peltason Dr</textPath></text>
            <text textLength="101"><textPath href="#anteater">Anteater Dr</textPath></text>
            <text textLength="118"><textPath href="#turtle">Turtle Rock Dr</textPath></text>
            <text textLength="81"><textPath href="#galaxy">Galaxy Dr</textPath></text>
            <text textLength="65"><textPath href="#ford">Ford Rd</textPath></text>
            <text transform="translate(1070 935) rotate(48.500)" textLength="173">San Joaquin Hills Rd</text>
          </g>
          <g font-family="Noto Sans" font-size="20.500" font-weight="500" fill="#414141" stroke="#fff" stroke-width="4" stroke-linejoin="round" paint-order="stroke">
            <text transform="translate(1184 470) rotate(43)" textLength="61">CA-73</text>
            <text transform="translate(1000 290) rotate(51)" textLength="47">A-73</text>
            <text transform="translate(1733 1011) rotate(64)" textLength="63">CA-73</text>
            <text textLength="63"><textPath href="#ca73a">CA-73</textPath></text>
            <text textLength="92"><textPath href="#culver">Culver Dr</textPath></text>
            <text textLength="95"><textPath href="#culver2">Culver Dr</textPath></text>
            <text transform="translate(1361 327) rotate(-50)">Jamboree</text>
            <text font-size="17.500" textLength="103"><textPath href="#toll">TOLL ROAD</textPath></text>
          </g>
          <g font-family="Noto Sans" font-size="19" font-style="italic" fill="#526e7b">
            <text textLength="207"><textPath href="#creek">San Diego Creek</textPath></text>
            <text transform="translate(1773 475) rotate(-23)" textLength="42">yon</text>
            <text transform="translate(1823 481) rotate(-19)" textLength="60">Wash</text>
            <text textLength="113"><textPath href="#drain">Drainage</textPath></text>
          </g>

          <!-- mapquest mark -->
          <rect x="766" y="1051" width="199" height="40" rx="20" fill="#fff"/>
          <g font-family="DejaVu Sans" font-weight="700" font-size="27" stroke-linejoin="miter">
            <text x="788" y="1080" fill="#222" stroke="#222" stroke-width="6.400" textLength="157" lengthAdjust="spacingAndGlyphs">mapquest</text>
            <text x="788" y="1080" fill="#fff" stroke="#fff" stroke-width="2.600" textLength="157" lengthAdjust="spacingAndGlyphs" aria-hidden="true">mapquest</text>
          </g>
        </svg>
        <div class="absolute left-5 top-5 w-[52px] h-[104px] rounded-[6px] bg-white shadow-[0_2px_12px_rgba(0,0,0,0.6)]">
          <svg class="block w-[52px] h-[104px]" viewBox="0 0 52 104" fill="none" stroke="#000" stroke-width="3.300"><path d="M17 26.500H36.500M26.500 17V36.500M17 79H36.500"/><path d="M0 51.500H52" stroke="#ccc" stroke-width="2"/></svg>
        </div>
        <div class="absolute right-0 bottom-0 w-[553px] h-[26px] bg-[#e9e9e9] flex items-center justify-end pr-[11px] font-['Liberation_Sans',sans-serif] text-[18px] leading-[26px] text-[#777]">
          <svg class="w-[534px] h-[26px]" viewBox="0 0 534 26" fill="#777">
            <text x="0" y="18" textLength="191">©2021 MAPQUEST,</text>
            <text x="199" y="18" font-weight="700" textLength="111">© MAPBOX</text><path d="M199 20.500H312V22.500H199Z"/>
            <text x="312" y="18">,</text><text x="326" y="18" textLength="111">© TOMTOM</text><path d="M447 5.500H449V18H447Z"/>
            <text x="461" y="18" font-weight="700" textLength="71">TERMS</text><path d="M461 20.500H533V22.500H461Z"/>
          </svg>
        </div>
      </div>
    </section>
  </div>
  <div class="mt-10 h-1 border-t-2 border-t-[#9a9a9a] border-b-2 border-b-[#eee]"></div>
  <div class="relative h-[206px] overflow-hidden">
    <div class="absolute left-[276px] top-[218px] w-[1364px] h-40 shadow-[0_0_70px_rgba(0,0,0,0.18)]"></div>
    <h1 class="relative pt-[110px] text-center text-[87px] leading-[110px] font-bold tracking-[-2.35px] whitespace-nowrap text-[#212121]">Live COVID Information in the U.S.</h1>
  </div>
</main>
</body>
</html>
